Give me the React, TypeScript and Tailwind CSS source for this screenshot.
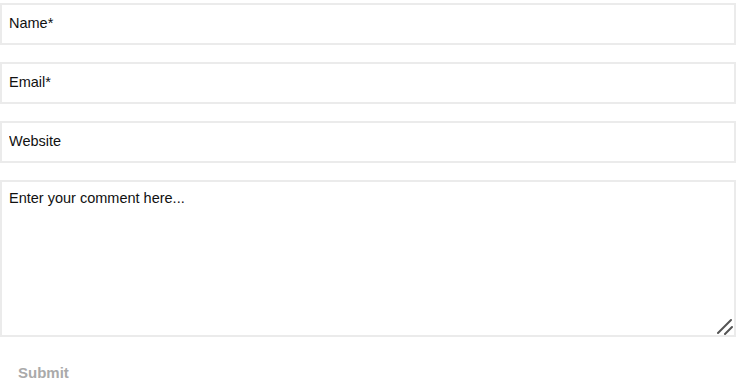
export default function App() {
  const field =
    "block w-[736px] h-[42px] border-2 border-[#ebebeb] bg-white pl-[7px] pb-[2px] text-[14.5px] text-black placeholder:text-[#111] outline-none";

  return (
    <div className="bg-white w-[743px] h-[392px] pt-[3px] font-['Liberation_Sans',Arial,sans-serif]">
      <form className="flex flex-col gap-[17px]" onSubmit={(e) => e.preventDefault()}>
        <input className={field} placeholder="Name*" />
        <input className={field} placeholder="Email*" />
        <input className={field} placeholder="Website" />
        <div className="relative w-[736px]">
          <textarea
            className="block w-[736px] h-[157px] border-2 border-[#ebebeb] bg-white px-[7px] py-[6px] text-[14.5px] text-black placeholder:text-[#111] outline-none resize-none"
            placeholder="Enter your comment here..."
          />
          {/* resize grip */}
          <svg className="absolute right-[3px] bottom-[2px] w-[17px] h-[17px] pointer-events-none" viewBox="0 0 17 17">
            <path d="M2 15 L15 2 M9 16 L16 9" stroke="#555" strokeWidth="2" strokeLinecap="round" />
          </svg>
        </div>
      </form>
      <button className="mt-[25px] ml-[18px] text-[15px] font-bold text-[#aaaaaa]">Submit</button>
    </div>
  );
}
